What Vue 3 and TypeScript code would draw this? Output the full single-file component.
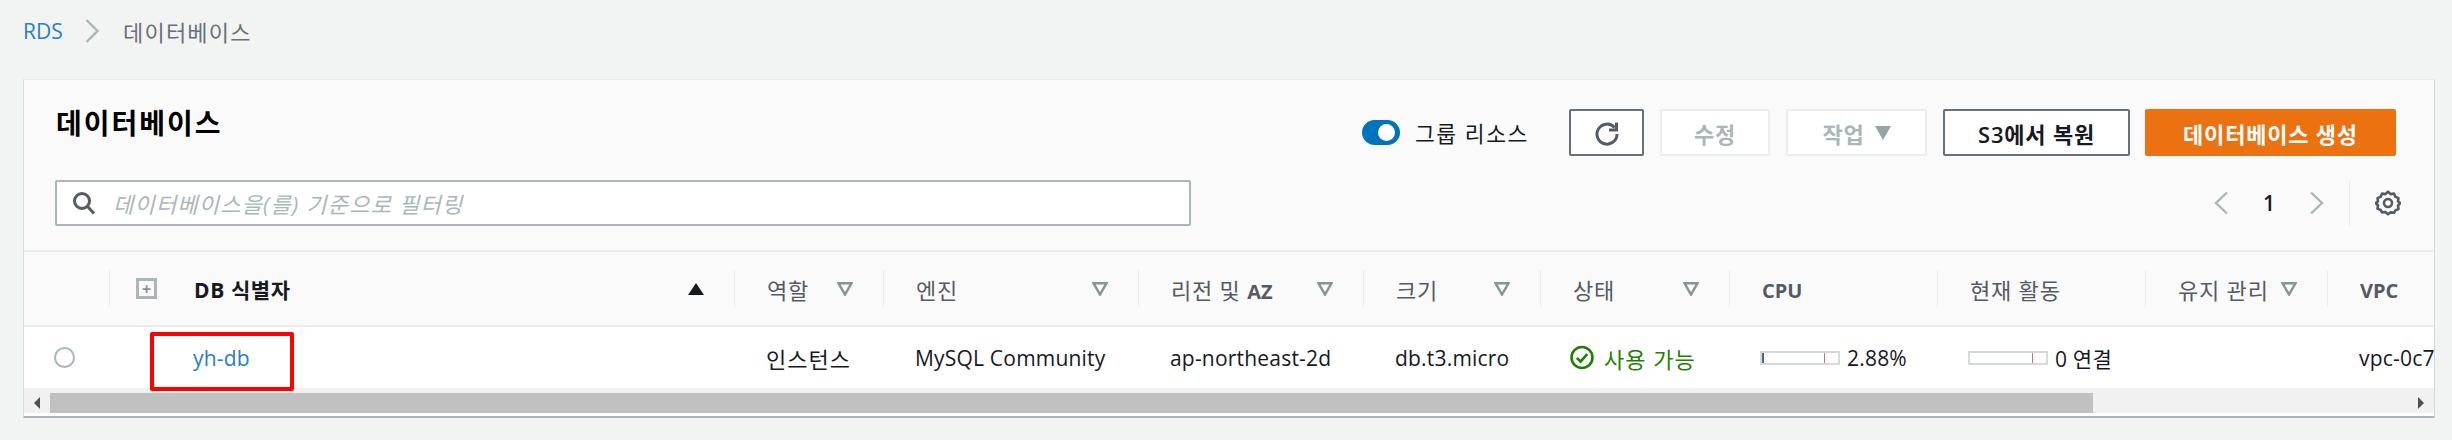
<script setup lang="ts">
interface Col { label: string; latin?: string; filter: boolean }
const cols: Col[] = [
  { label: '역할', filter: true },
  { label: '엔진', filter: true },
  { label: '리전 및 ', latin: 'AZ', filter: true },
  { label: '크기', filter: true },
  { label: '상태', filter: true },
  { label: '', latin: 'CPU', filter: false },
  { label: '현재 활동', filter: false },
  { label: '유지 관리', filter: true },
  { label: '', latin: 'VPC', filter: false },
]
</script>

<template>
  <div class="page">
    <nav class="crumbs">
      <a class="crumb-link">RDS</a>
      <svg class="crumb-sep" width="14" height="24" viewBox="0 0 14 24"><path d="M1.5 1l11 11-11 11" fill="none" stroke="#aab7b8" stroke-width="2.4"/></svg>
      <span class="crumb-now">데이터베이스</span>
    </nav>

    <section class="card">
      <div class="head">
        <div class="head-top">
          <h1 class="title">데이터베이스</h1>
          <div class="toggle"><span class="knob"></span></div>
          <span class="toggle-label">그룹 리소스</span>
          <button class="btn refresh" aria-label="새로 고침">
            <svg width="26" height="26" viewBox="0 0 26 26"><path d="M20.5 7.5A10 10 0 1 0 23 14" fill="none" stroke="#545b64" stroke-width="3"/><path d="M22.5 2.5v7.5H15" fill="none" stroke="#545b64" stroke-width="3"/></svg>
          </button>
          <button class="btn off edit">수정</button>
          <button class="btn off action">작업<span class="caret"></span></button>
          <button class="btn restore">S3에서 복원</button>
          <button class="btn primary">데이터베이스 생성</button>
        </div>
        <div class="head-bottom">
          <div class="search">
            <svg width="24" height="24" viewBox="0 0 24 24"><circle cx="10" cy="10" r="7.5" fill="none" stroke="#545b64" stroke-width="3"/><path d="M15.5 15.5l6.5 7" stroke="#545b64" stroke-width="3" fill="none"/></svg>
            <span class="placeholder">데이터베이스을(를) 기준으로 필터링</span>
          </div>
          <div class="pager">
            <svg width="16" height="24" viewBox="0 0 16 24"><path d="M14 1.5L3 12l11 10.5" fill="none" stroke="#aab7b8" stroke-width="2.4"/></svg>
            <span class="page-no">1</span>
            <svg width="16" height="24" viewBox="0 0 16 24"><path d="M2 1.5L13 12 2 22.5" fill="none" stroke="#aab7b8" stroke-width="2.4"/></svg>
            <span class="pager-sep"></span>
            <svg width="26" height="26" viewBox="0 0 26 26">
              <path d="M13 1.8l2.6 2.3 3.4-.5 1.4 3.1 3.1 1.4-.5 3.4 2.3 1.5-2.3 2.6.5 3.4-3.1 1.4-1.4 2.4-3.4-.4L13 24.2l-2.6-2.2-3.4.4-1.4-2.4-3.1-1.4.5-3.4L.7 13l2.3-1.5-.5-3.4 3.1-1.4L7 3.6l3.4.5z" fill="none" stroke="#545b64" stroke-width="2.6" stroke-linejoin="round"/>
              <circle cx="13" cy="13" r="4" fill="none" stroke="#545b64" stroke-width="2.6"/>
            </svg>
          </div>
        </div>
      </div>

      <div class="table">
        <div class="grid thead">
          <div class="th-empty"></div>
          <div class="th th-id">
            <span class="expand"><span class="plus">+</span></span>
            <span class="th-strong">DB 식별자</span>
            <span class="sort"></span>
          </div>
          <div v-for="c in cols" :key="c.label + c.latin" class="th">
            <span class="th-label">{{ c.label }}<b v-if="c.latin" class="th-latin">{{ c.latin }}</b></span>
            <svg v-if="c.filter" class="funnel" width="16" height="14" viewBox="0 0 16 14"><path d="M1.5 1.2h13L8 12.6z" fill="#fafafa" stroke="#879596" stroke-width="2.4"/></svg>
          </div>
        </div>

        <div class="grid tbody">
          <div class="td td-radio"><span class="radio"></span></div>
          <div class="td td-id">
            <a class="db-link">yh-db</a>
            <span class="highlight"></span>
          </div>
          <div class="td ko">인스턴스</div>
          <div class="td">MySQL Community</div>
          <div class="td">ap-northeast-2d</div>
          <div class="td">db.t3.micro</div>
          <div class="td status ko">
            <svg width="24" height="25" viewBox="0 0 24 25"><circle cx="12" cy="12.5" r="10.5" fill="none" stroke="#1d8102" stroke-width="2.6"/><path d="M6.8 12.8l3.8 3.8 6.6-7.4" fill="none" stroke="#1d8102" stroke-width="2.6"/></svg>
            <span>사용 가능</span>
          </div>
          <div class="td metric"><span class="bar"><i class="fill"></i><i class="tick"></i></span><span>2.88%</span></div>
          <div class="td metric"><span class="bar"><i class="tick"></i></span><span class="conn">0 연결</span></div>
          <div class="td"></div>
          <div class="td">vpc-0c7</div>
        </div>
      </div>

      <div class="scrollbar">
        <span class="arrow left"></span>
        <span class="thumb"></span>
        <span class="rest"></span>
        <span class="arrow right"></span>
      </div>
    </section>
  </div>
</template>

<style>
html, body { margin: 0; background: #f2f3f3; }
</style>

<style scoped>
.page {
  width: 2452px;
  height: 440px;
  box-sizing: border-box;
  padding: 0 17px 0 23px;
  background: #f2f3f3;
  overflow: hidden;
  font-family: "Open Sans", "Noto Sans CJK KR", sans-serif;
  font-size: 21px;
  color: #16191f;
}
.crumbs {
  height: 62px;
  margin-bottom: 17px;
  display: flex;
  align-items: center;
}
.crumb-link { color: #2a80c0; width: 62px; font-size: 21px; }
.crumb-sep { margin-right: 24px; }
.crumb-now { color: #687078; font-size: 22px; letter-spacing: 1.2px; }
.card {
  background: #fafafa;
  border-left: 1px solid #d5dbdb;
  border-right: 1px solid #d5dbdb;
  border-bottom: 2px solid #aab7b8;
  border-top: 1px solid #eaeded;
  box-sizing: border-box;
  height: 339px;
  display: flex;
  flex-direction: column;
}
.head { height: 170px; box-sizing: border-box; padding: 29px 38px 0 31px; }
.head-top { display: flex; align-items: center; height: 47px; }
.title {
  margin: 0 auto 22px 1px;
  font-size: 28px;
  letter-spacing: 2px;
  font-weight: 700;
  color: #000;
}
.toggle {
  width: 38px;
  height: 25px;
  border-radius: 13px;
  background: #0073bb;
  display: flex;
  align-items: center;
  justify-content: flex-end;
  padding-right: 5px;
  box-sizing: border-box;
}
.knob { width: 17px; height: 17px; border-radius: 50%; background: #fff; }
.toggle-label { margin-left: 15px; margin-right: 40px; letter-spacing: 1.6px; color: #16191f; font-size: 21.5px; }
.btn {
  height: 47px;
  box-sizing: border-box;
  border-radius: 2px;
  background: #fff;
  border: 2px solid #687078;
  font-family: inherit;
  font-size: 22px;
  font-weight: 600;
  letter-spacing: 0.8px;
  color: #545b64;
  padding: 0;
  display: flex;
  align-items: center;
  justify-content: center;
}
.refresh { width: 75px; }
.off { border-color: #eaeded; color: #aab7b8; margin-left: 16px; }
.edit { width: 110px; }
.action { width: 141px; gap: 10px; }
.caret { width: 0; height: 0; border-left: 8px solid transparent; border-right: 8px solid transparent; border-top: 14px solid #95a5a6; }
.restore { width: 187px; margin-left: 16px; color: #16191f; }
.primary { width: 251px; margin-left: 15px; background: #ec7211; border-color: #ec7211; color: #fff; }
.head-bottom { display: flex; align-items: center; justify-content: space-between; margin-top: 24px; height: 46px; }
.search {
  width: 1136px;
  height: 46px;
  box-sizing: border-box;
  background: #fff;
  border: 2px solid #aab7b8;
  border-radius: 2px;
  display: flex;
  align-items: center;
  padding-left: 15px;
  gap: 17px;
}
.placeholder { color: #aab7b8; font-style: italic; letter-spacing: 1.2px; font-size: 22px; }
.pager { display: flex; align-items: center; height: 46px; margin-right: -5px; }
.page-no { width: 80px; text-align: center; font-weight: 600; color: #16191f; }
.pager-sep { width: 1px; height: 46px; background: #eaeded; margin: 0 25px 0 24px; }
.table { flex: 0 0 auto; overflow-x: clip; overflow-y: visible; }
.grid {
  display: grid;
  grid-template-columns: 85px 625px 149px 255px 225px 177px 189px 208px 208px 182px 108px;
  align-items: center;
}
.thead { height: 77px; border-top: 2px solid #eaeded; box-sizing: border-box; border-bottom: 2px solid #eaeded; }
.th {
  height: 37px;
  display: flex;
  align-items: center;
  justify-content: space-between;
  border-left: 1px solid #eaeded;
  padding: 0 30px 0 32px;
  box-sizing: border-box;
  color: #545b64;
  white-space: nowrap;
}
.th-label { font-size: 22px; letter-spacing: 0.8px; }
.th-latin { font-size: 20px; font-weight: 700; letter-spacing: 0; }
.th-id { padding-left: 26px; justify-content: flex-start; }
.th-strong { font-weight: 700; font-size: 21px; letter-spacing: 0.6px; color: #16191f; margin-left: 37px; }
.expand {
  width: 21px;
  height: 21px;
  box-sizing: border-box;
  border: 3px solid #aab7b8;
  display: flex;
  align-items: center;
  justify-content: center;
}
.plus { color: #879596; font-size: 16px; line-height: 1; font-weight: 700; }
.sort {
  margin-left: auto;
  width: 0;
  height: 0;
  border-left: 8px solid transparent;
  border-right: 8px solid transparent;
  border-bottom: 12px solid #16191f;
}
.tbody { height: 61px; background: #fff; }
.td {
  padding-left: 32px;
  white-space: nowrap;
  color: #16191f;
  font-size: 21px;
  letter-spacing: 0.2px;
  box-sizing: border-box;
}
.ko { font-size: 22px; letter-spacing: 1px; }
.td-radio { padding-left: 30px; display: flex; }
.radio { width: 21px; height: 21px; box-sizing: border-box; border: 2px solid #aab7b8; border-radius: 50%; background: #fff; }
.td-id { position: relative; padding-left: 84px; height: 61px; display: flex; align-items: center; }
.db-link { color: #2a80c0; }
.highlight {
  position: absolute;
  left: 41px;
  top: 5px;
  width: 144px;
  height: 59px;
  box-sizing: border-box;
  border: 4px solid #f00;
  border-radius: 2px;
  z-index: 2;
}
.status { display: flex; align-items: center; gap: 10px; color: #1d8102; padding-left: 30px; }
.metric { display: flex; align-items: center; gap: 7px; padding-left: 31px; }
.conn { font-size: 21px; }
.bar {
  position: relative;
  width: 80px;
  height: 14px;
  box-sizing: border-box;
  border: 2px solid #d5dbdb;
  background: #fff;
  flex: none;
}
.fill { position: absolute; left: 0; top: 0; bottom: 0; width: 2px; background: #44698f; }
.tick { position: absolute; left: 62px; top: 0; bottom: 0; width: 1px; background: #e8606c; }
.scrollbar {
  height: 28px;
  display: flex;
  align-items: flex-start;
  background: #f1f1f1;
  border-bottom: 3px solid #fff;
  box-sizing: border-box;
  padding-top: 5px;
}
.thumb { width: 2043px; height: 20px; background: #c1c1c1; }
.rest { flex: 1; }
.arrow { width: 26px; height: 20px; display: flex; flex: none; justify-content: center; align-items: center; }
.arrow::before { content: ""; width: 0; height: 0; border-top: 6px solid transparent; border-bottom: 6px solid transparent; }
.arrow.left::before { border-right: 6px solid #505050; }
.arrow.right::before { border-left: 6px solid #505050; }
</style>
